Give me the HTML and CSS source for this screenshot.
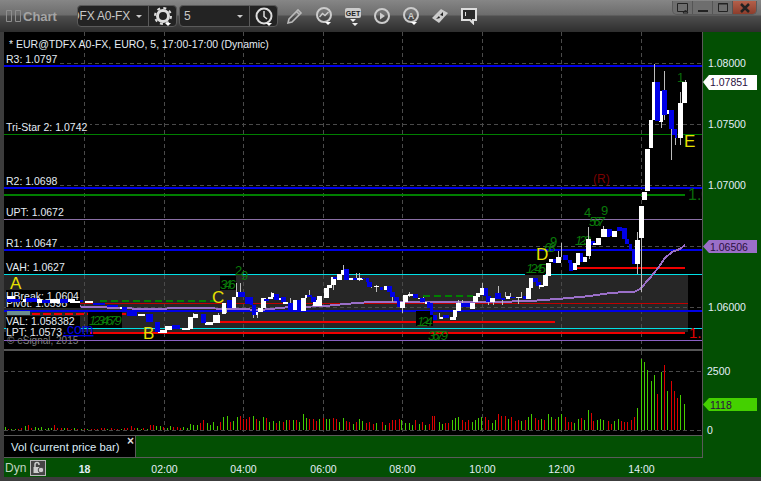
FILE: index.html
```html
<!DOCTYPE html>
<html lang="en">
<head>
<meta charset="utf-8">
<title>Chart</title>
<link rel="stylesheet" href="styles.css">
</head>
<body>
<div class="window">
  <header class="toolbar">
    <svg class="handle" width="15" height="12" viewBox="0 0 15 12"><path d="M.5.5h5v11h-5zM9.500.5h5v11h-5z"/></svg>
    <span class="title">Chart</span>
    <div class="combo combo-symbol">
      <div class="field field-symbol"><span class="field-text">TDFX A0-FX</span><i class="caret"></i></div>
      <button class="combo-btn">
        <svg class="ico" width="20" height="20" viewBox="0 0 20 20"><circle cx="10" cy="10" r="5.500" fill="none" stroke="#ddd" stroke-width="3"/><circle cx="10" cy="10" r="8" fill="none" stroke="#ddd" stroke-width="2" stroke-dasharray="3 3.300"/><path d="M12 17h6l-3 3z" fill="#fff"/></svg>
      </button>
    </div>
    <div class="combo combo-interval">
      <div class="field field-interval"><span class="field-text">5</span><i class="caret"></i></div>
      <button class="combo-btn">
        <svg class="ico" width="20" height="20" viewBox="0 0 20 20"><circle cx="10" cy="10" r="7.500" fill="none" stroke="#ddd" stroke-width="2"/><path d="M10 5v5.500l3 2.500" fill="none" stroke="#ddd" stroke-width="1.500"/><path d="M12 17h6l-3 3z" fill="#fff"/></svg>
      </button>
    </div>
    <div class="tools">
      <svg class="ico" width="18" height="18" viewBox="0 0 18 18"><path d="M3 12 12 3l3 3-9 9-4 1zM10.500 4.500l3 3" fill="none" stroke="#bbb" stroke-width="1.600"/></svg>
      <svg class="ico" width="18" height="20" viewBox="0 0 18 20"><circle cx="9" cy="9" r="7" fill="none" stroke="#ccc" stroke-width="2"/><path d="M4.500 11 7.500 7.500l2.500 2L13.500 6" fill="none" stroke="#ccc" stroke-width="1.400"/><path d="M10 16h6l-3 3z" fill="#fff"/></svg>
      <svg class="ico" width="18" height="20" viewBox="0 0 18 20"><rect x="1" y="2" width="16" height="10" rx="2" fill="#ccc"/><path d="M6 13h6l-3 3-3-3zM8 17h6l-3 3z" fill="#eee"/><text x="9" y="10" class="get">GET</text></svg>
      <svg class="ico" width="18" height="18" viewBox="0 0 18 18"><circle cx="9" cy="9" r="7" fill="none" stroke="#ccc" stroke-width="2"/><path d="M7 5.500v7l5-3.500z" fill="#ccc"/></svg>
      <svg class="ico" width="18" height="20" viewBox="0 0 18 20"><circle cx="9" cy="9" r="7" fill="none" stroke="#ccc" stroke-width="2"/><text x="9" y="12.500" class="auto">A</text><path d="M9 16h6l-3 3z" fill="#fff"/></svg>
      <svg class="ico" width="18" height="18" viewBox="0 0 18 18"><path d="M1 11 10 2l7 4-9 10z" fill="#ccc"/><path d="M5 12l3-3 1 2zM12 5l-3 3 3 1z" fill="#222"/></svg>
      <svg class="ico" width="18" height="18" viewBox="0 0 18 18"><path d="M2 2h14v11h-3v3l-3-3H2z" fill="#2a2a2a" stroke="#ddd" stroke-width="2"/><path d="M5.500 5v4" stroke="#ddd"/></svg>
    </div>
    <div class="winbtns">
      <span class="winbtn"><svg width="14" height="12" viewBox="0 0 14 12"><path d="M1.500 1.500h10v8h-10zM7 11h5l-2.500-3z" fill="none" stroke="#222"/></svg></span>
      <span class="winbtn"><svg width="12" height="12" viewBox="0 0 12 12"><path d="M1 8h10v2H1z" fill="#222"/></svg></span>
      <span class="winbtn"><svg width="12" height="12" viewBox="0 0 12 12"><path d="M1.500 1.500h9v8h-9zM1 2h10" fill="none" stroke="#222"/></svg></span>
      <span class="winbtn winbtn-close"><svg width="12" height="12" viewBox="0 0 12 12"><path d="M2 2l8 8M10 2l-8 8" stroke="#222" stroke-width="2.500"/></svg></span>
    </div>
  </header>

  <main class="panes">
    <svg class="pane-price" width="698" height="317" viewBox="4 32 698 317">
      <g class="grid">
        <path d="M84.500 32V349M164.500 32V349M243.500 32V349M323.500 32V349M402.500 32V349M482.500 32V349M561.500 32V349M641.500 32V349"/>
        <path d="M4 63.500H702M4 124.500H702M4 185.500H702M4 246.500H702M4 307.500H702"/>
      </g>
      <rect class="band" x="4" y="275" width="684" height="57"/>
      <g class="grid"><path d="M84.500 275V332M164.500 275V332M243.500 275V332M323.500 275V332M402.500 275V332M482.500 275V332M561.500 275V332M641.500 275V332M4 307.500H688"/></g>

      <path class="lv blue2" d="M4 66H702M4 188H702M4 250H702M4 310.500H702"/>
      <path class="lv green1" d="M4 134.500H702"/>
      <path class="lv green2" d="M4 194.500H685"/>
      <path class="lv purple1" d="M4 219.500H702"/>
      <path class="lv cyan" d="M4 274.500H702"/>
      <path class="lv cyan2" d="M4 328.500H702"/>
      <path class="lv red1" d="M68 303.500H688"/>
      <path class="lv red2" d="M90 333H685M219 322H555M577 268H685"/>
      <path class="lv red-dash" d="M10 314H90M118 314H135"/>
      <path class="lv green-dash" d="M100 300.500H215"/>
      <path class="lv green-dash" d="M423 296H473"/>
      <path class="lv purple2" d="M4 340.500H702"/>
      <path class="ma" d="M68 306 145 309 190 308 240 309 260 310 285 307.500 325 306 345 304 370 302 440 302 500 302 537 300.500 563 298.500 590 296 610 293 635 291.500 640 289 650 278 658 268 665 258 672 252 680 249 685 245"/>

      <rect class="lbl-bg" x="4" y="53" width="54" height="12"/>
      <rect class="lbl-bg" x="4" y="120" width="86" height="12"/>
      <rect class="lbl-bg" x="4" y="175" width="54" height="12"/>
      <rect class="lbl-bg" x="6" y="206" width="57" height="12"/>
      <rect class="lbl-bg" x="4" y="237" width="54" height="12"/>
      <rect class="lbl-bg" x="6" y="261" width="62" height="13"/>
      <rect class="lbl-bg" x="6" y="290" width="74" height="18"/>
      <rect class="lbl-bg" x="6" y="316" width="74" height="24"/>
      <rect class="lbl-bg" x="88" y="312" width="34" height="16"/>
      <rect class="lbl-bg" x="220" y="276" width="16" height="14"/>
      <rect class="lbl-bg" x="416" y="311" width="17" height="15"/>
      <rect class="lbl-bg" x="525" y="255" width="20" height="20"/>
      <rect class="tealbox" x="7" y="311" width="23" height="4"/>

      <text class="head" x="9" y="48">* EUR@TDFX A0-FX, EURO, 5, 17:00-17:00 (Dynamic)</text>
      <text class="lbl" x="6" y="63">R3: 1.0797</text>
      <text class="lbl" x="6" y="131">Tri-Star 2: 1.0742</text>
      <text class="lbl" x="6" y="185">R2: 1.0698</text>
      <text class="lbl" x="6" y="216">UPT: 1.0672</text>
      <text class="lbl" x="6" y="247">R1: 1.0647</text>
      <text class="lbl" x="6" y="271">VAH: 1.0627</text>
      <text class="lbl" x="6" y="300">UBreak: 1.0604</text>
      <text class="lbl" x="6" y="307">Pivot: 1.0598</text>
      <text class="lbl" x="6" y="325">VAL: 1.058382</text>
      <text class="lbl" x="6" y="336">LPT: 1.0573</text>
      <text class="link" x="63" y="334">.com</text>
      <text class="copy" x="7" y="344">© eSignal, 2015</text>

      <text class="count" x="89" y="325">1234679</text>
      <text class="count" x="220" y="289">346</text>
      <text class="count count-big" x="241" y="280">9</text>
      <text class="count count-big" x="235" y="275">2</text>
      <text class="count" x="417" y="326">124</text>
      <text class="count" x="428" y="340">3679</text>
      <text class="count" x="526" y="273">1245</text>
      <text class="count" x="544" y="252">68</text>
      <text class="count count-big" x="550" y="246">9</text>
      <text class="count" x="575" y="245">123</text>
      <text class="count" x="589" y="226">567</text>
      <text class="count count-big" x="584" y="217">4</text>
      <text class="count count-big" x="601" y="215">9</text>

      <g class="wick">
        <g transform="translate(70 255) scale(.3333)">
          <path d="M500 85V125M512 85V112M402 205V178M370 175V190M445 175V200M470 160V175"/>
        </g>
        <g transform="translate(250 255) scale(.3333)">
          <path d="M0 125V150M12 175V190M22 170V188M65 112V125M178 105V125M122 130V145M250 90V105M280 30V45M320 55V75M328 55V78M365 92V100M380 90V112M428 125V140M457 158V175M478 112V125M520 125V145"/>
        </g>
        <g transform="translate(430 200) scale(.3333)">
          <path d="M28 340V358M85 300V312M97 300V312M157 250V265M175 305V315M190 305V315M205 258V280M217 300V315M226 276V292M243 278V290M265 295V312M275 275V290M330 258V268M385 152V170M394 128V170M475 80V118M478 165V178M522 78V88"/>
        </g>
        <path d="M637.500 232V274M641.500 238V292M654 64V82M664 71V120M661 120V128M671 120V160M675 129V145M680 92V103M680 138V145M685 80V82"/>
      </g>
      <path class="body-w" transform="translate(0 260) scale(.3333)" d="M20 108h25v10H20zM68 118h12v7H68zM110 118h15v10h-15zM150 118h30v10h-30zM205 118h20v7h-20z"/>
      <path class="body-b" transform="translate(0 260) scale(.3333)" d="M20 116h40v9H20zM78 115h32v10H78zM125 120h25v8h-25zM180 118h25v10h-25z"/>
      <path class="body-w" transform="translate(70 255) scale(.3333)" d="M0 138h30v6H0zM45 138h25v6H45zM150 155h5v6h-5zM205 176h20v8h-20zM265 225h25v10h-25zM285 212h20v13h-20zM335 219h25v7h-25zM355 185h15v37h-15zM370 178h15v12h-15zM405 200h25v10h-25zM430 180h20v25h-20zM455 145h13v33h-13zM485 125h13v33h-13zM498 112h10v13h-10z"/>
      <path class="body-b" transform="translate(70 255) scale(.3333)" d="M30 136h10v6H30zM70 143h35v7H70zM110 149h35v6h-35zM155 155h15v15h-15zM170 172h30v10h-30zM228 178h22v22h-22zM255 200h15v32h-15zM305 210h25v12h-25zM393 178h15v27h-15zM472 135h13v23h-13zM505 112h20v13h-20zM525 125h15v23h-15z"/>
      <path class="body-w" transform="translate(250 255) scale(.3333)" d="M10 170h15v10H10zM25 158h13v14H25zM33 128h15v32H33zM55 125h15v7H55zM62 115h10v10H62zM85 128h10v7H85zM100 140h15v6h-15zM122 158h13v7h-13zM130 135h10v30h-10zM152 128h16v40h-16zM165 120h5v8h-5zM190 135h10v17h-10zM200 122h15v30h-15zM222 98h15v32h-15zM230 90h15v10h-15zM243 65h15v25h-15zM262 58h13v17h-13zM273 45h10v15h-10zM290 70h20v6h-20zM320 70h20v5h-20zM372 93h16v4h-16zM402 92h10v13h-10zM450 140h15v18h-15zM460 120h13v20h-13zM473 118h15v4h-15zM503 128h7v4h-7zM525 142h8v4h-8z"/>
      <path class="body-b" transform="translate(250 255) scale(.3333)" d="M0 125h10v25H0zM5 150h13v30H5zM42 132h16v6H42zM72 118h16v17H72zM93 125h14v17H93zM113 145h15v20h-15zM140 135h12v33h-12zM170 120h15v5h-15zM183 125h14v15h-14zM250 65h12v7h-12zM282 42h15v33h-15zM310 68h10v7h-10zM335 68h10v4h-10zM347 68h11v12h-11zM352 80h13v17h-13zM390 97h10v8h-10zM411 92h14v20h-14zM420 112h15v13h-15zM432 125h15v13h-15zM441 138h9v17h-9zM488 118h15v12h-15zM510 130h15v12h-15zM532 142h8v18h-8z"/>
      <path class="body-b" transform="translate(430 200) scale(.3333)" d="M0 310h8v35H0zM8 345h12v15H8zM38 345h20v10H38zM92 308h28v14H92zM160 263h13v25h-13zM168 288h15v17h-15zM195 280h18v18h-18zM213 295h12v5h-12zM238 290h17v5h-17zM280 288h8v10h-8zM310 233h13v12h-13zM318 245h15v13h-15zM370 178h8v10h-8zM400 165h13v15h-13zM413 180h12v8h-12zM418 188h10v24h-10zM448 158h12v27h-12zM480 122h15v14h-15zM528 88h12v22h-12z"/>
      <path class="body-w" transform="translate(430 200) scale(.3333)" d="M30 350h8v8h-8zM60 350h18v10H60zM68 330h14v20H68zM78 310h14v22H78zM120 308h15v18h-15zM130 288h15v18h-15zM138 280h12v10h-12zM150 263h13v22h-13zM180 295h15v10h-15zM228 288h12v10h-12zM258 290h17v5h-17zM288 263h15v35h-15zM296 235h14v30h-14zM328 255h14v7h-14zM340 225h13v33h-13zM348 188h14v40h-14zM358 178h12v8h-12zM378 170h14v18h-14zM428 190h12v20h-12zM438 158h12v37h-12zM458 170h12v15h-12zM468 118h15v50h-15zM490 130h10v6h-10zM498 115h14v20h-14zM512 88h16v22h-16z"/>
      <path class="body-w" transform="translate(500 200) scale(.3333)" d="M305 88h15v22h-15zM335 92h15v18h-15zM405 120h15v72h-15zM417 18h16v95h-16z"/>
      <path class="body-b" transform="translate(500 200) scale(.3333)" d="M320 88h15v20h-15zM350 82h15v10h-15zM365 85h17v33h-17zM375 118h13v14h-13zM388 132h7v18h-7zM395 150h10v42h-10z"/>
      <path class="body-w" transform="translate(500 50) scale(.3333)" d="M425 425h15v25h-15zM435 297h15v125h-15zM447 210h13v83h-13zM457 95h8v115h-8zM478 122h12v93h-12zM495 180h12v12h-12zM533 160h15v105h-15zM547 97h13v61h-13z"/>
      <path class="body-b" transform="translate(500 50) scale(.3333)" d="M465 95h15v117h-15zM487 120h13v75h-13zM507 180h15v57h-15zM515 237h15v18h-15zM525 255h7v10h-7z"/>

      <text class="letter" x="10" y="289">A</text>
      <text class="letter" x="143" y="339">B</text>
      <text class="letter" x="212" y="303">C</text>
      <text class="letter" x="536" y="260">D</text>
      <text class="letter" x="684" y="147">E</text>
      <text class="r-mark" x="593" y="183">(R)</text>
      <text class="num-green" x="677" y="82">1</text>
      <text class="num-clip" x="688" y="200">1.0</text>
      <text class="num-red" x="689" y="338">1.0</text>
    </svg>

    <aside class="axis">
      <svg width="58" height="426" viewBox="703 32 58 426">
        <text class="tick" x="708" y="67">1.08000</text>
        <text class="tick" x="708" y="128">1.07500</text>
        <text class="tick" x="708" y="189">1.07000</text>
        <text class="tick" x="708" y="311">1.06000</text>
        <path fill="#fff" d="M703 82l6-7h48v15h-48z"/>
        <text class="tag-t" x="710" y="86">1.07851</text>
        <path fill="#9a6fc8" d="M703 246.500l6-6.500h48v13h-48z"/>
        <text class="tag-t" x="710" y="251">1.06506</text>
        <text class="tick" x="707" y="375">2500</text>
        <path fill="#44d000" d="M703 404.500l6-6.500h48v13h-48z"/>
        <text class="tag-t" x="710" y="409">1118</text>
        <text class="tick" x="707" y="434">0</text>
      </svg>
    </aside>

    <div class="sep"></div>

    <svg class="pane-vol" width="698" height="84" viewBox="4 351 698 84">
      <g class="grid"><path d="M84.500 351V435M164.500 351V435M243.500 351V435M323.500 351V435M402.500 351V435M482.500 351V435M561.500 351V435M641.500 351V435M4 371.500H702M4 430.500H702"/></g>
      <g class="v-green" transform="translate(0 345) scale(.3333)">
        <path d="M16 247V256M36 253V256M46 252V256M76 243V256M106 246V256M116 250V256M126 247V256M136 252V256M146 250V256M156 250V256M194 250V256M224 250V256M244 252V256M264 252V256M324 252V256M364 252V256M414 248V256M424 252V256M442 252V256M470 242V256M482 242V256M502 250V256M512 243V256M552 246V256M562 248V256M572 238V256M582 240V256M592 240V256M622 234V256M632 240V256M642 232V256M652 244V256M672 217V256M682 212V256M701 228V256M712 215V256M760 213V256M780 227V256M790 216V256M810 230V256M820 228V256M840 228V256M860 224V256M880 226V256M900 230V256M910 207V256M920 218V256M960 222V256M980 222V256M990 222V256M1018 230V256M1030 218V256M1060 236V256M1078 222V256M1088 227V256M1130 234V256"/>
      </g>
      <g class="v-red" transform="translate(0 345) scale(.3333)">
        <path d="M26 252V256M56 252V256M66 250V256M86 240V256M96 248V256M164 240V256M174 248V256M184 250V256M204 250V256M214 252V256M234 252V256M254 252V256M274 253V256M284 252V256M294 253V256M304 250V256M314 250V256M334 248V256M344 252V256M354 252V256M374 250V256M384 250V256M394 243V256M404 248V256M432 250V256M452 240V256M462 240V256M492 247V256M522 247V256M532 247V256M542 250V256M602 235V256M611 226V256M662 232V256M691 232V256M722 213V256M730 222V256M740 222V256M750 215V256M770 222V256M800 218V256M830 235V256M850 230V256M870 224V256M890 226V256M928 222V256M940 222V256M950 228V256M970 220V256M1000 220V256M1010 222V256M1040 228V256M1050 232V256M1070 232V256M1100 234V256M1110 230V256M1120 238V256"/>
      </g>
      <g class="v-green" transform="translate(380 345) scale(.3333)">
        <path d="M18 240V256M66 226V256M76 233V256M88 235V256M98 241V256M118 238V256M138 240V256M178 232V256M187 238V256M217 225V256M227 219V256M235 216V256M277 231V256M286 225V256M296 219V256M306 217V256M338 234V256M346 226V256M386 222V256M425 228V256M445 216V256M454 207V256M485 222V256M505 207V256M515 216V256M536 216V256M545 207V256M584 234V256M595 222V256M614 225V256M625 195V256M654 225V256M663 222V256M672 225V256M703 228V256M715 222V256M772 189V256M785 42V256M793 51V256M803 75V256M814 108V256M823 90V256M844 80V256M862 138V256M902 150V256M913 177V256"/>
      </g>
      <g class="v-red" transform="translate(380 345) scale(.3333)">
        <path d="M8 232V256M28 235V256M38 225V256M48 226V256M58 222V256M106 225V256M128 231V256M148 237V256M157 214V256M165 213V256M197 235V256M207 234V256M247 226V256M257 231V256M266 226V256M316 216V256M326 225V256M356 208V256M366 213V256M376 213V256M396 216V256M406 228V256M415 226V256M436 225V256M466 219V256M476 225V256M495 225V256M526 222V256M556 216V256M565 231V256M575 231V256M604 219V256M634 204V256M642 228V256M685 228V256M694 237V256M725 228V256M735 231V256M744 231V256M754 226V256M764 216V256M832 147V256M853 60V256M874 108V256M883 138V256M893 159V256"/>
      </g>
    </svg>

    <div class="tabs">
      <div class="tab"><span>Vol (current price bar)</span><i class="tab-x">×</i></div>
      <div class="tab-fill"></div>
    </div>

    <footer class="timebar">
      <span class="dyn">Dyn</span>
      <span class="lock"><svg width="13" height="13" viewBox="0 0 13 13"><path d="M3 6V3.500a2 2 0 0 1 4 0V4" fill="none" stroke="#ccc" stroke-width="1.500"/><rect x="1.500" y="6" width="6.500" height="6" fill="#ccc"/><circle cx="9" cy="9" r="2.800" fill="#ccc" stroke="#444"/></svg></span>
      <svg class="times" width="761" height="19" viewBox="0 458 761 19">
        <text class="time time-b" x="84.500" y="473">18</text>
        <text class="time" x="164.500" y="473">02:00</text>
        <text class="time" x="243.500" y="473">04:00</text>
        <text class="time" x="323.500" y="473">06:00</text>
        <text class="time" x="402.500" y="473">08:00</text>
        <text class="time" x="482.500" y="473">10:00</text>
        <text class="time" x="561.500" y="473">12:00</text>
        <text class="time" x="641.500" y="473">14:00</text>
      </svg>
    </footer>
  </main>
</div>
</body>
</html>
```
FILE: styles.css
```css
* { box-sizing: border-box; }
html, body { margin: 0; padding: 0; }
body { width: 761px; height: 481px; overflow: hidden; background: #3c3c3c; font-family: "Liberation Sans", Arial, sans-serif; }
svg { display: block; }

.window { width: 761px; height: 481px; display: flex; flex-direction: column; padding: 0 0 4px 4px; background: #3c3c3c; }

.toolbar {
  height: 32px; flex: none; margin-left: -4px; padding: 0 4px 0 6px;
  display: flex; align-items: center; position: relative;
  background: linear-gradient(#868686 0, #6c6c6c 15px, #4e4e4e 16px, #2e2e2e 32px);
}
.handle { flex: none; margin-right: 2px; }
.handle path { fill: none; stroke: #8e8e8e; }
.title { font-size: 13px; font-weight: bold; color: #a4a4a4; width: 54px; }
.combo { display: flex; height: 22px; border: 1px solid #5a5a5a; border-radius: 4px; background: #232323; overflow: hidden; }
.combo-symbol { width: 100px; }
.combo-interval { width: 99px; margin-left: 2px; }
.field { flex: 1; min-width: 0; display: flex; align-items: center; position: relative; border-right: 1px solid #5a5a5a; color: #c8c8c8; font-size: 12px; }
.field-symbol { justify-content: flex-end; padding-right: 18px; }
.field-symbol .field-text { white-space: nowrap; width: 53px; direction: rtl; overflow: hidden; letter-spacing: -.2px; }
.field-interval { padding-left: 4px; }
.caret { position: absolute; right: 6px; top: 9px; border: 3px solid transparent; border-top: 3px solid #ccc; border-bottom: 0; }
.combo-btn { width: 27px; flex: none; padding: 0; border: 0; background: none; display: flex; align-items: center; justify-content: center; }
.tools { display: flex; align-items: center; gap: 11px; margin-left: 8px; }
.ico { flex: none; }
.get { font: bold 7px "Liberation Sans", sans-serif; fill: #222; text-anchor: middle; }
.auto { font: bold 9px "Liberation Sans", sans-serif; fill: #ccc; text-anchor: middle; }
.winbtns { position: absolute; right: 4px; top: 1px; display: flex; height: 14px; border: 1px solid #5a5a5a; border-top: 0; border-radius: 0 0 5px 5px; overflow: hidden; background: #6e6e6e; }
.winbtn { width: 20px; display: flex; align-items: center; justify-content: center; border-right: 1px solid #555; }
.winbtn-close { width: 23px; background: linear-gradient(#b4604a, #8c3d2c); border: 0; }

.panes { flex: 1; display: grid; grid-template-columns: 698px 59px; grid-template-rows: 317px 2px 84px 23px 19px; }
.pane-price { grid-column: 1; grid-row: 1; background: #000; }
.sep { grid-column: 1; grid-row: 2; background: #555; }
.pane-vol { grid-column: 1; grid-row: 3; background: #000; }
.axis { grid-column: 2; grid-row: 1 / span 4; background: #034f03; border-left: 1px solid #5a5a5a; margin-right: -4px; width: 59px; }
.tabs { grid-column: 1; grid-row: 4; display: flex; background: #034f03; border-top: 1px solid #5a5a5a; border-bottom: 1px solid #5a5a5a; }
.tab { width: 132px; background: #000; border-right: 1px solid #5a5a5a; color: #dcecf6; font-size: 11.300px; display: flex; align-items: center; padding-left: 7px; position: relative; }
.tab-x { position: absolute; left: 123px; top: 0; color: #ddd; font-style: normal; font-size: 12px; font-weight: bold; line-height: 11px; }
.tab-fill { flex: 1; }
.timebar { grid-column: 1 / span 2; grid-row: 5; margin: 0 -4px 0 -4px; background: #034f03; position: relative; display: flex; align-items: center; gap: 4px; border-left: 4px solid #3c3c3c; padding-left: 1px; }
.dyn { color: #c2d4c2; font-size: 12px; position: relative; z-index: 1; }
.lock { width: 16px; height: 16px; border: 1px solid #b8b8b8; background: #444; display: flex; align-items: center; justify-content: center; position: relative; z-index: 1; }
.times { position: absolute; left: -4px; top: 0; }
.time { font: 10.500px "Liberation Sans", sans-serif; fill: #e4f0f8; text-anchor: middle; }
.time-b { font-weight: bold; }

.grid path { fill: none; stroke: #4a4a4a; stroke-dasharray: 4 3; shape-rendering: crispEdges; }
.band { fill: #262626; }
.lv { fill: none; shape-rendering: crispEdges; }
.blue2 { stroke: #0000e6; stroke-width: 2; }
.green1 { stroke: #007f00; }
.green2 { stroke: #007f00; stroke-width: 2; }
.purple1 { stroke: #8a6fa6; }
.purple2 { stroke: #8a5fc4; stroke-width: 1; }
.cyan { stroke: #00e0e6; }
.cyan2 { stroke: #00e0e6; }
.red1 { stroke: #c00000; }
.red2 { stroke: #f00000; stroke-width: 2; }
.red-dash { stroke: #f00000; stroke-width: 2; stroke-dasharray: 8 3; }
.green-dash { stroke: #008000; stroke-width: 2; stroke-dasharray: 7 4; }
.ma { fill: none; stroke: #9a6fc8; stroke-width: 2; shape-rendering: crispEdges; }
.lbl-bg { fill: #000; }
.tealbox { fill: #6e8e8e; }

.head, .lbl { font: 10.500px "Liberation Sans", sans-serif; fill: #e4ecf4; }
.link { font: 14px "Liberation Sans", sans-serif; fill: #0000e6; text-decoration: underline; }
.copy { font: 10px "Liberation Sans", sans-serif; fill: #7e7e7e; }
.count { font: italic 13px "Liberation Sans", sans-serif; fill: #0a7a0a; letter-spacing: -3px; }
.count-big { font: 13px "Liberation Sans", sans-serif; letter-spacing: 0; }
.wick path { fill: none; stroke: #bcbcbc; stroke-width: 1; shape-rendering: crispEdges; vector-effect: non-scaling-stroke; }
.body-w { fill: #fff; shape-rendering: crispEdges; }
.body-b { fill: #0000e6; shape-rendering: crispEdges; }
.letter { font: 17px "Liberation Sans", sans-serif; fill: #e6e000; }
.r-mark { font: 12px "Liberation Sans", sans-serif; fill: #7a0000; }
.num-green { font: 13px "Liberation Sans", sans-serif; fill: #0a6a0a; }
.num-clip { font: 16px "Liberation Sans", sans-serif; fill: #0a6a0a; }
.num-red { font: 15px "Liberation Sans", sans-serif; fill: #e00000; }

.tick { font: 10.500px "Liberation Sans", sans-serif; fill: #e4f0f8; }
.tag-t { font: 10.500px "Liberation Sans", sans-serif; fill: #2a1040; }

.v-green path, .v-red path { fill: none; stroke-width: 1; shape-rendering: crispEdges; vector-effect: non-scaling-stroke; }
.v-green path { stroke: #44cc00; }
.v-red path { stroke: #dd0000; }
```
